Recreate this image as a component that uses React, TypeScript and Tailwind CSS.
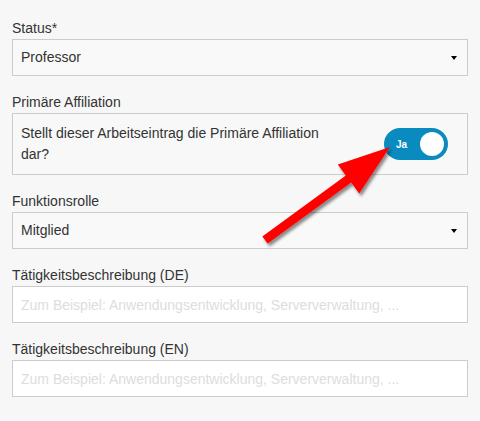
import React from "react";

const font = { fontFamily: '"Liberation Sans", Arial, sans-serif' };

function Label({ children }: { children: React.ReactNode }) {
  return <div className="text-[14px] leading-[20px] text-[#333] mb-[1px]">{children}</div>;
}

function Select({ value }: { value: string }) {
  return (
    <div className="h-[37px] border border-[#ccc] bg-[#f9f9f9] flex items-center justify-between pl-[8px] pr-[10px]">
      <span className="text-[14px] text-[#333]">{value}</span>
      <span className="w-0 h-0 border-t-[4px] border-t-black border-x-[3px] border-x-transparent" />
    </div>
  );
}

function TextInput() {
  return (
    <input
      readOnly
      placeholder="Zum Beispiel: Anwendungsentwicklung, Serververwaltung, ..."
      className="block w-full h-[37px] border border-[#ccc] bg-white px-[8px] text-[14px] text-[#333] placeholder:text-[#ddd] outline-none"
      style={font}
    />
  );
}

export default function App() {
  return (
    <div className="relative w-[480px] h-[421px] bg-[#f7f7f7] px-[12px] pt-[18px]" style={font}>
      <div className="flex flex-col gap-[16px]">
        <div>
          <Label>Status*</Label>
          <Select value="Professor" />
        </div>
        <div>
          <Label>Primäre Affiliation</Label>
          <div className="h-[62px] border border-[#ccc] bg-[#f8f8f8] flex items-center justify-between pl-[8px] pr-[19px]">
            <p className="w-[320px] text-[14px] leading-[21px] text-[#333]">
              Stellt dieser Arbeitseintrag die Primäre Affiliation dar?
            </p>
            <div className="w-[64px] h-[32px] rounded-full bg-[#0a8bbf] flex items-center justify-between pl-[12px] pr-[4px]">
              <span className="text-[10px] font-bold text-white">Ja</span>
              <span className="w-[24px] h-[24px] rounded-full bg-white" />
            </div>
          </div>
        </div>
        <div>
          <Label>Funktionsrolle</Label>
          <Select value="Mitglied" />
        </div>
        <div>
          <Label>Tätigkeitsbeschreibung (DE)</Label>
          <TextInput />
        </div>
        <div>
          <Label>Tätigkeitsbeschreibung (EN)</Label>
          <TextInput />
        </div>
      </div>
      <svg
        className="absolute left-0 top-0 pointer-events-none"
        width="480"
        height="421"
        viewBox="0 0 480 421"
      >
        <defs>
          <filter id="sh" x="-20%" y="-20%" width="140%" height="140%">
            <feDropShadow dx="2" dy="3" stdDeviation="1.6" floodColor="#000" floodOpacity="0.45" />
          </filter>
        </defs>
        <polygon
          filter="url(#sh)"
          fill="#ff0000"
          points="262.3,236.4 345.8,175.4 337.8,164.6 390,147 359.2,193.4 351.2,182.6 267.7,243.6"
        />
      </svg>
    </div>
  );
}
